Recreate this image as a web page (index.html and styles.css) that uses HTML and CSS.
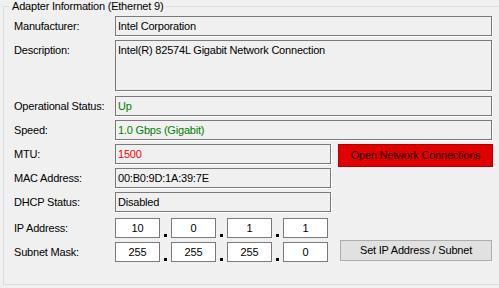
FILE: index.html
```html
<!DOCTYPE html>
<html>
<head>
<meta charset="utf-8">
<link rel="stylesheet" href="styles.css">
</head>
<body>
<fieldset class="group">
  <legend class="group-title">Adapter Information (Ethernet 9)</legend>
  <div class="rows">
    <div class="row">
      <span class="label">Manufacturer:</span>
      <div class="box box-wide">Intel Corporation</div>
    </div>
    <div class="row row-tall">
      <span class="label">Description:</span>
      <div class="box box-wide box-tall">Intel(R) 82574L Gigabit Network Connection</div>
    </div>
    <div class="row row-after-tall">
      <span class="label">Operational Status:</span>
      <div class="box box-wide text-ok">Up</div>
    </div>
    <div class="row">
      <span class="label">Speed:</span>
      <div class="box box-wide text-ok">1.0 Gbps (Gigabit)</div>
    </div>
    <div class="row">
      <span class="label">MTU:</span>
      <div class="box box-short text-alert">1500</div>
      <button class="btn btn-danger">Open Network Connections</button>
    </div>
    <div class="row">
      <span class="label">MAC Address:</span>
      <div class="box box-short">00:B0:9D:1A:39:7E</div>
    </div>
    <div class="row">
      <span class="label">DHCP Status:</span>
      <div class="box box-short">Disabled</div>
    </div>
    <div class="row row-ip">
      <span class="label">IP Address:</span>
      <div class="octets">
        <div class="octet">10</div><span class="dot"></span>
        <div class="octet">0</div><span class="dot"></span>
        <div class="octet">1</div><span class="dot"></span>
        <div class="octet">1</div>
      </div>
    </div>
    <div class="row">
      <span class="label">Subnet Mask:</span>
      <div class="octets">
        <div class="octet">255</div><span class="dot"></span>
        <div class="octet">255</div><span class="dot"></span>
        <div class="octet">255</div><span class="dot"></span>
        <div class="octet">0</div>
      </div>
      <button class="btn btn-default">Set IP Address / Subnet</button>
    </div>
  </div>
</fieldset>
</body>
</html>
```
FILE: styles.css
```css
html, body {
  margin: 0;
  padding: 0;
  background: #f0f0f0;
  overflow: hidden;
}

body {
  width: 499px;
  height: 288px;
  font-family: "Liberation Sans", Arial, sans-serif;
  font-size: 11px;
  letter-spacing: -0.2px;
  color: #000;
}

.group {
  margin: 0 0 0 3px;
  padding: 0;
  width: 497px;
  border: 1px solid #dcdcdc;
  box-sizing: border-box;
  min-inline-size: 0;
}

.group-title {
  margin-left: 5px;
  padding: 0 3px;
  line-height: 13px;
}

.rows {
  display: flex;
  flex-direction: column;
  gap: 4px;
  padding: 3px 0 22px 10px;
}

.row {
  display: flex;
  align-items: flex-start;
  height: 20px;
}

.row-tall {
  height: 51px;
}

.row-after-tall {
  margin-top: 1px;
}

.row-ip {
  margin-top: 2px;
}

.label {
  width: 101px;
  flex: none;
  line-height: 20px;
  white-space: nowrap;
}

.box {
  box-sizing: border-box;
  height: 20px;
  border: 1px solid #7a7a7a;
  box-shadow: 1px 1px 0 #ffffff;
  background: #f0f0f0;
  padding: 0 2px;
  line-height: 18px;
  white-space: nowrap;
  overflow: hidden;
}

.box-wide {
  width: 377px;
}

.box-short {
  width: 216px;
}

.box-tall {
  height: 51px;
}

.text-ok {
  color: #008000;
}

.text-alert {
  color: #ff0000;
}

.octets {
  display: flex;
  height: 20px;
}

.octet {
  box-sizing: border-box;
  width: 45px;
  height: 20px;
  border: 1px solid #7a7a7a;
  background: #ffffff;
  text-align: center;
  line-height: 18px;
}

.dot {
  width: 3px;
  height: 3px;
  margin: 16px 4px 0;
  background: #000;
}

.btn {
  box-sizing: border-box;
  font-family: inherit;
  font-size: 11px;
  letter-spacing: -0.2px;
  padding: 0;
  flex: none;
}

.btn-danger {
  width: 155px;
  height: 23px;
  margin-left: 7px;
  background: #e00000;
  border: 1px solid #b00000;
  color: #1a0000;
  line-height: 21px;
}

.btn-default {
  width: 152px;
  height: 21px;
  margin-left: 12px;
  margin-top: -2px;
  background: #e1e1e1;
  border: 1px solid #adadad;
  color: #000;
  line-height: 19px;
}
```
